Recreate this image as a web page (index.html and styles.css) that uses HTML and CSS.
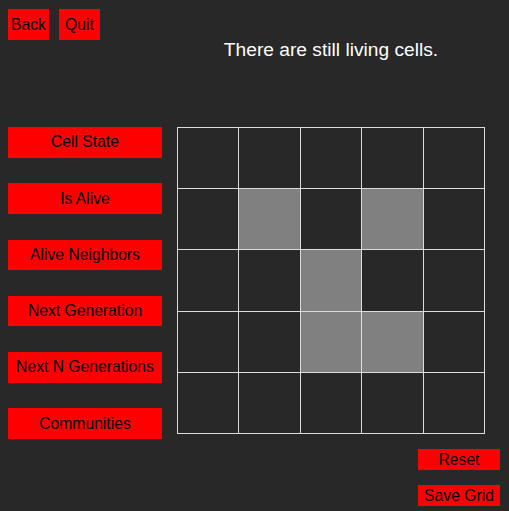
FILE: index.html
```html
<!DOCTYPE html>
<html lang="en">
<head>
<meta charset="utf-8">
<title>Game of Life</title>
<link rel="stylesheet" href="styles.css">
</head>
<body>
<div class="app">
  <div class="nav">
    <button class="btn btn-small">Back</button>
    <button class="btn btn-small">Quit</button>
  </div>
  <div class="status">There are still living cells.</div>
  <div class="controls">
    <button class="btn btn-wide">Cell State</button>
    <button class="btn btn-wide">Is Alive</button>
    <button class="btn btn-wide">Alive Neighbors</button>
    <button class="btn btn-wide">Next Generation</button>
    <button class="btn btn-wide">Next N Generations</button>
    <button class="btn btn-wide">Communities</button>
  </div>
  <div class="board">
    <div class="cell"></div><div class="cell"></div><div class="cell"></div><div class="cell"></div><div class="cell"></div>
    <div class="cell"></div><div class="cell alive"></div><div class="cell"></div><div class="cell alive"></div><div class="cell"></div>
    <div class="cell"></div><div class="cell"></div><div class="cell alive"></div><div class="cell"></div><div class="cell"></div>
    <div class="cell"></div><div class="cell"></div><div class="cell alive"></div><div class="cell alive"></div><div class="cell"></div>
    <div class="cell"></div><div class="cell"></div><div class="cell"></div><div class="cell"></div><div class="cell"></div>
  </div>
  <div class="actions">
    <button class="btn btn-action">Reset</button>
    <button class="btn btn-action">Save Grid</button>
  </div>
</div>
</body>
</html>
```

FILE: styles.css
```css
html, body {
  margin: 0;
  padding: 0;
  background: #282828;
  height: 100%;
}

.app {
  box-sizing: border-box;
  width: 509px;
  padding: 9px 9px 0 8px;
  display: grid;
  grid-template-columns: 154px 308px;
  grid-template-rows: 118px 307px auto;
  column-gap: 15px;
  row-gap: 0;
  font-family: "Liberation Sans", Arial, sans-serif;
}

.btn {
  border: none;
  margin: 0;
  padding: 0;
  background: #ff0000;
  color: #000;
  font-family: "Liberation Sans", Arial, sans-serif;
  font-size: 15.7px;
  display: flex;
  align-items: center;
  justify-content: center;
  white-space: nowrap;
  flex-shrink: 0;
}

.nav {
  display: flex;
  gap: 10px;
  align-items: flex-start;
}

.btn-small {
  width: 41px;
  height: 31px;
}

.status {
  padding-top: 29px;
  color: #fff;
  font-size: 19.2px;
  line-height: 23px;
  text-align: center;
}

.controls {
  display: flex;
  flex-direction: column;
  gap: 25.8px;
}

.btn-wide {
  width: 154px;
  height: 30.5px;
}

.board {
  display: grid;
  grid-template-columns: repeat(5, 1fr);
  grid-template-rows: repeat(5, 1fr);
  gap: 1px;
  padding: 1px;
  box-sizing: border-box;
  width: 308px;
  height: 307px;
  background: #dcdcdc;
}

.cell {
  background: #282828;
}

.cell.alive {
  background: #808080;
}

.actions {
  grid-column: 1 / -1;
  justify-self: end;
  display: flex;
  flex-direction: column;
  gap: 15px;
  margin-top: 15px;
  margin-right: -15px;
}

.btn-action {
  width: 82px;
  height: 21px;
}
```
